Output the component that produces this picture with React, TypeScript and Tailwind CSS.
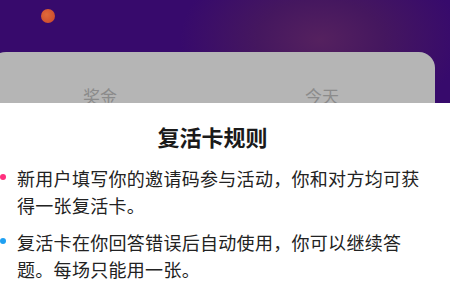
const rules = [
  { dot: "bg-[#ff2f7d]", text: "新用户填写你的邀请码参与活动，你和对方均可获得一张复活卡。" },
  { dot: "bg-[#1fa0f2]", text: "复活卡在你回答错误后自动使用，你可以继续答题。每场只能用一张。" },
];

export default function App() {
  return (
    <div
      className="w-[450px] h-[301px] overflow-hidden bg-white"
      style={{ fontFamily: '"Noto Sans CJK SC", "Noto Sans", sans-serif' }}
    >
      {/* dimmed page behind the sheet */}
      <div className="relative h-[103px] pt-[52px] bg-[radial-gradient(ellipse_140px_90px_at_320px_40px,#55215f_0%,#45175f_45%,#370a6c_100%)]">
        <span className="absolute left-[41px] top-[9px] w-[14px] h-[14px] rounded-full bg-[radial-gradient(circle_at_40%_40%,#e06a3a,#c8442a)]" />
        <div className="-ml-[10px] w-[445px] h-[51px] rounded-t-[16px] bg-[#b5b5b5] overflow-hidden">
          <div className="flex pt-[33px] text-[17px] leading-[22px] text-[#8b8b8b]">
            <span className="ml-[93px]">奖金</span>
            <span className="ml-[188px]">今天</span>
          </div>
        </div>
      </div>

      {/* rules sheet */}
      <div className="pt-[18px]">
        <h2 className="w-[425px] text-center text-[22px] leading-[30px] font-bold text-[#1a1a1a]">
          复活卡规则
        </h2>
        <div className="mt-[14px] flex flex-col gap-[10px]">
          {rules.map((r, i) => (
            <div key={i} className="flex items-start">
              <span className={`shrink-0 w-[6px] h-[6px] rounded-full mt-[9px] mr-[11px] ${r.dot}`} />
              <p className="w-[406px] text-[18px] leading-[27px] tracking-[0.3px] text-[#222]">{r.text}</p>
            </div>
          ))}
        </div>
      </div>
    </div>
  );
}
